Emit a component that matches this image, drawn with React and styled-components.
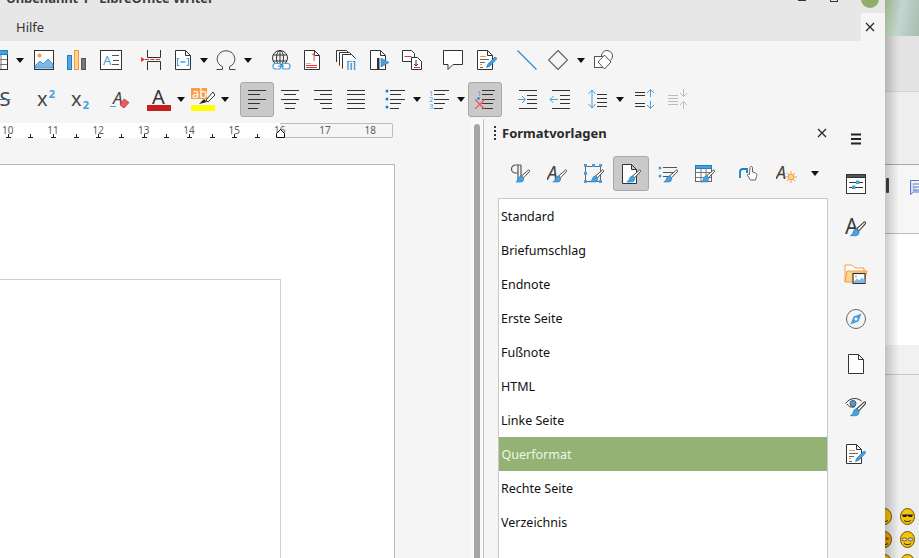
import React from "react";
import styled, { createGlobalStyle } from "styled-components";

const INK = "#333333";
const BLUE = "#1c7fc4";
const SKY = "#4a9fdd";
const ORANGE = "#f59a3e";
const RED = "#e0353a";

const GlobalStyle = createGlobalStyle`
  html, body { margin: 0; height: 100%; overflow: hidden; }
  #root { height: 100%; }
  body { font-family: "Noto Sans", "Open Sans", sans-serif; }
`;

const Screen = styled.div`
  display: flex;
  width: 919px;
  height: 558px;
  overflow: hidden;
  background: #eee;
`;

const Win = styled.div`
  display: flex;
  flex-direction: column;
  flex: 0 0 885px;
  height: 100%;
  overflow: hidden;
  background: #f5f5f5;
`;

const TitleBar = styled.div`
  display: flex;
  align-items: flex-start;
  flex: 0 0 13px;
  padding-left: 6px;
  overflow: hidden;
  background: #e7e7e7;
`;

const TitleText = styled.span`
  margin-top: -12px;
  font-size: 13px;
  line-height: 20px;
  font-weight: 700;
  color: #3d3d3d;
  white-space: nowrap;
  letter-spacing: -0.1px;
`;

const MinBtn = styled.span`
  width: 8px;
  height: 1px;
  margin-left: auto;
  background: #333;
`;

const MaxBtn = styled.span`
  width: 6px;
  height: 1px;
  margin-left: 24px;
  border: 1px solid #333;
  border-top: 0;
`;

const CloseDot = styled.span`
  width: 18px;
  height: 18px;
  margin: -10px 6px 0 23px;
  border-radius: 50%;
  background: #8fae6b;
`;

const MenuBar = styled.div`
  display: flex;
  align-items: center;
  flex: 0 0 28px;
  background: #e7e7e7;
`;

const MenuItem = styled.span`
  margin-left: 16px;
  font-size: 13px;
  color: #333;
`;

const MenuClose = styled.div`
  display: flex;
  align-items: center;
  box-sizing: border-box;
  width: 24px;
  height: 100%;
  margin-left: auto;
  padding-left: 4px;
  background: #f5f5f5;
`;

const Toolbar = styled.div`
  display: flex;
  align-items: center;
  flex: 0 0 ${(p) => p.$h}px;
`;

const Tool = styled.span`
  display: flex;
  align-items: center;
  justify-content: center;
  flex: 0 0 ${(p) => p.$w || 20}px;
  height: 20px;
  margin-left: ${(p) => p.$ml || 0}px;
`;

const ActiveTool = styled.span`
  display: flex;
  align-items: center;
  justify-content: center;
  box-sizing: border-box;
  flex: 0 0 34px;
  height: 35px;
  margin-left: ${(p) => p.$ml || 0}px;
  border: 1px solid #a8a8a8;
  border-radius: 3px;
  background: #c9c9c9;
`;

const Arrow = styled.span`
  flex: none;
  width: 0;
  height: 0;
  margin-left: ${(p) => p.$ml || 0}px;
  border-left: 4px solid transparent;
  border-right: 4px solid transparent;
  border-top: 5px solid #111;
`;

const StrikeS = styled.span`
  font-size: 20px;
  line-height: 20px;
  color: #444;
  text-decoration: line-through;
  text-decoration-color: ${BLUE};
  text-decoration-thickness: 1px;
`;

const ScriptText = styled.span`
  font-size: 20px;
  line-height: 20px;
  color: #444;
`;

const ScriptMark = styled.span`
  position: relative;
  top: ${(p) => (p.$up ? -6 : 5)}px;
  margin-left: 1px;
  font-size: 11px;
  font-weight: 700;
  color: ${SKY};
`;

const Main = styled.div`
  display: flex;
  flex: 1;
  min-height: 0;
`;

const DocArea = styled.div`
  display: flex;
  flex-direction: column;
  flex: 0 0 471px;
  padding-top: 4px;
  overflow: hidden;
`;

const Ruler = styled.div`
  position: relative;
  display: flex;
  flex: 0 0 15px;
  width: 393px;
  background: linear-gradient(90deg, #fff 280px, transparent 280px);
`;

const RulerMargin = styled.div`
  position: absolute;
  top: 0;
  left: 280px;
  width: 112px;
  height: 13px;
  border: 1px solid #bcbcbc;
  border-left: 0;
  border-radius: 0 2px 2px 0;
`;

const RulerUnit = styled.div`
  position: relative;
  flex: 0 0 45.33px;
  margin-left: ${(p) => p.$ml || 0}px;
  font-size: 10px;
  line-height: 14px;
  text-align: center;
  color: #6b5a4d;
`;

const Tick = styled.i`
  position: absolute;
  bottom: 0;
  left: ${(p) => p.$left};
  width: 5px;
  height: 4px;
  margin-left: -2px;
  background:
    linear-gradient(#222, #222) center bottom / 5px 1px no-repeat,
    linear-gradient(#222, #222) center top / 1px 4px no-repeat;
`;

const IndentMark = styled.i`
  position: absolute;
  left: 276px;
  bottom: 0;
  display: flex;
  width: 9px;
  height: 9px;
`;

const Page = styled.div`
  display: flex;
  flex: 1;
  box-sizing: border-box;
  width: 405px;
  margin: 26px 0 0 -10px;
  padding: 114px 113px 0 0;
  border: 1px solid #b9b9b9;
  border-bottom: 0;
  background: #fff;
`;

const MarginBox = styled.div`
  flex: 1;
  border-top: 1px solid #cfcfcf;
  border-right: 1px solid #cfcfcf;
`;

const ScrollTrack = styled.div`
  flex: 0 0 13px;
  padding: 5px 3px 0;
  box-sizing: border-box;
  border-right: 1px solid #bfbfbf;
  background: #f9f9f9;
`;

const ScrollThumb = styled.div`
  width: 6px;
  height: 100%;
  border-radius: 3px 3px 0 0;
  background: #a6a6a6;
`;

const Panel = styled.div`
  display: flex;
  flex-direction: column;
  flex: 0 0 357px;
`;

const PanelHead = styled.div`
  display: flex;
  align-items: center;
  flex: 0 0 28px;
  padding: 0 14px 0 10px;
`;

const Grip = styled.span`
  display: grid;
  gap: 2px;
  margin-right: 6px;
`;

const GripDot = styled.i`
  display: block;
  width: 2px;
  height: 2px;
  background: #333;
`;

const PanelTitle = styled.span`
  flex: 1;
  font-size: 13px;
  font-weight: 700;
  color: #2a2a2a;
`;

const StyleBar = styled.div`
  display: flex;
  align-items: center;
  flex: 0 0 35px;
  margin-top: 9px;
  padding-left: 18px;
`;

const StyleBtn = styled.span`
  display: flex;
  align-items: center;
  justify-content: center;
  box-sizing: border-box;
  flex: 0 0 36px;
  height: 35px;
  margin-left: ${(p) => p.$ml || 0}px;
  border: 1px solid ${(p) => (p.$active ? "#a8a8a8" : "transparent")};
  border-radius: 3px;
  background: ${(p) => (p.$active ? "#c9c9c9" : "transparent")};
`;

const StyleList = styled.ul`
  flex: 1;
  width: 330px;
  box-sizing: border-box;
  margin: 7px 0 0 14px;
  padding: 0;
  list-style: none;
  border: 1px solid #c9c9c9;
  border-bottom: 0;
  background: #fff;
`;

const StyleRow = styled.li`
  height: 34px;
  padding-left: ${(p) => (p.$selected ? 2.5 : 2)}px;
  font-size: 12.5px;
  line-height: 36px;
  color: ${(p) => (p.$selected ? "#eef6e4" : "#111")};
  background: ${(p) => (p.$selected ? "#93b273" : "transparent")};
`;

const TabBar = styled.div`
  display: flex;
  flex-direction: column;
  gap: 25px;
  flex: 0 0 44px;
  padding: 10px 0 0 2px;
  box-sizing: border-box;
`;

const TabIcon = styled.span`
  display: flex;
  align-items: center;
  justify-content: center;
  width: 26px;
  height: 20px;
`;

const Backdrop = styled.div`
  position: relative;
  display: flex;
  flex-direction: column;
  flex: 1;
  overflow: hidden;
  &::after {
    content: "";
    position: absolute;
    top: 36px;
    bottom: 0;
    left: 0;
    width: 14px;
    background: linear-gradient(90deg, rgba(0, 0, 0, 0.2), transparent);
  }
`;

const Band = styled.div`
  position: relative;
  flex: ${(p) => (p.$h ? `0 0 ${p.$h}px` : "1")};
  box-sizing: border-box;
  border-bottom: ${(p) => (p.$line ? `1px solid ${p.$line}` : "0")};
  background: ${(p) => p.$bg};
`;

const DocMark = styled.span`
  position: absolute;
  top: 13px;
  left: 25px;
`;

const DarkMark = styled.span`
  position: absolute;
  top: 13px;
  left: 1px;
  width: 3px;
  height: 15px;
  border-radius: 1px;
  background: #444;
`;

const EmojiGrid = styled.div`
  display: grid;
  grid-template-columns: 15px 15px;
  grid-auto-rows: 17px;
  gap: 6px 8px;
  margin: 133px 0 0 -8px;
`;

const Svg = ({ w = 20, h = 20, children }) => (
  <svg width={w} height={h} viewBox={`0 0 ${w} ${h}`} fill="none" stroke={INK} strokeWidth="1">
    {children}
  </svg>
);

const Brush = ({ large }) => (
  <g transform={large ? "translate(-1 -3) scale(1.1 1.15)" : undefined}>
    <path d="M18.500 6 11.500 12l2 1.800L19.500 7.500c.4-1-.2-1.800-1-1.500z" fill="#fff" stroke={INK} strokeWidth=".9" />
    <path d="M11.300 12c-2.600.3-2.700 2.500-3.300 3.800-.3.8-1.200 1.600-2.200 2.200h4.700c2.300 0 3.700-1.800 3-4.100z" fill={SKY} stroke={BLUE} strokeWidth=".6" />
  </g>
);

const Pencil = () => (
  <path d="M20 8.500 13 16l-3.500 1.500L11 14l7-7z" fill={SKY} stroke={BLUE} strokeWidth=".8" />
);

const Doc = ({ x = 3.5, y = 0.5, w = 14, h = 19, fill = "#fff" }) => (
  <path d={`M${x} ${y}h${w - 5}l5 5v${h - 5}h-${w}z M${x + w - 5} ${y}v5h5`} fill={fill} stroke={INK} />
);

const Lines = ({ rows, x = 1 }) => (
  <g stroke={INK}>
    {rows.map(([l, r], i) => (
      <path key={i} d={`M${x + l} ${Math.floor(i * 4.5) + 1.5}H${x + r}`} />
    ))}
  </g>
);

const icons = {
  table: (
    <Svg>
      <rect x=".5" y=".5" width="19" height="19" fill="#fff" />
      <rect x=".5" y=".5" width="19" height="4" fill={SKY} stroke={BLUE} />
      <path d="M7 5v14M13 5v14M1 9.500h18M1 14.500h18" stroke="#777" />
    </Svg>
  ),
  image: (
    <Svg>
      <rect x=".5" y=".5" width="19" height="19" fill="#fff" />
      <circle cx="5.500" cy="5.500" r="2" fill={ORANGE} stroke="none" />
      <path d="M1 18v-2l5-5 3 3 5-5 5 5v4z" fill="#7db9e8" stroke={BLUE} strokeWidth=".7" />
    </Svg>
  ),
  chart: (
    <Svg>
      <rect x=".5" y="5.500" width="4" height="14" fill="#5ba4dd" stroke={BLUE} />
      <rect x="7.500" y=".5" width="4" height="19" fill="#fcd38f" stroke={ORANGE} />
      <rect x="14.500" y="8.500" width="4" height="11" fill="#777" stroke="#555" />
    </Svg>
  ),
  textbox: (
    <Svg w={22}>
      <rect x=".5" y=".5" width="21" height="19" fill="#fff" />
      <text x="3" y="15" fontSize="13" fontFamily="Noto Sans" fill={SKY} stroke="none">A</text>
      <path d="M12 5.500h7M13 10.500h6M12 14.500h7" stroke="#555" />
    </Svg>
  ),
  pagebreak: (
    <Svg w={22}>
      <path d="M7.500 0v7.500h13V0M7.500 20v-8.500h13V20" />
      <path d="M5 9.500h16" stroke={RED} strokeDasharray="4 1.500" />
      <path d="M1 7v5l4-2.500z" fill={RED} stroke="none" />
    </Svg>
  ),
  field: (
    <Svg w={18}>
      <Doc x={1.5} w={15} />
      <path d="M5.500 8.500h-2v7h2M12.500 8.500h2v7h-2" stroke={SKY} strokeWidth="1.200" />
      <path d="M6.500 12h5" stroke={SKY} strokeWidth="1.500" />
    </Svg>
  ),
  omega: (
    <Svg>
      <path d="M.5 19.500h6v-2.800C3 15 1.200 12.400 1.200 9.400 1.200 4.400 5 .8 10 .8s8.800 3.600 8.800 8.600c0 3-1.800 5.600-5.300 7.300v2.800h6" stroke="#444" />
    </Svg>
  ),
  link: (
    <Svg w={22}>
      <circle cx="10" cy="8" r="7.500" />
      <ellipse cx="10" cy="8" rx="3.500" ry="7.500" />
      <path d="M3 5h14M3 11h14M10 0v16" />
      <rect x="3" y="13.500" width="8" height="5.500" rx="2.500" fill="#fff" stroke={SKY} strokeWidth="1.200" />
      <rect x="12" y="13.500" width="8" height="5.500" rx="2.500" fill="#fff" stroke={SKY} strokeWidth="1.200" />
      <path d="M8 16.200h6" stroke={SKY} strokeWidth="1.200" />
    </Svg>
  ),
  footnote: (
    <Svg w={16}>
      <Doc x={.5} w={15} />
      <text x="7" y="11" fontSize="10" fontFamily="Noto Sans" fill={RED} stroke="none">1</text>
      <path d="M2 13.500h5" stroke="#bbb" />
      <path d="M2 15.500h11M2 17.500h11" stroke={RED} />
    </Svg>
  ),
  endnote: (
    <Svg w={22}>
      <path d="M.5 12V.5h10l3 3" />
      <path d="M3.500 15.500V2.500h10l3 3" fill="#fff" />
      <path d="M6.500 18.500V4.500h9l4 4v1" fill="#fff" />
      <rect x="10" y="9" width="12" height="11" fill="#f5f5f5" stroke="none" />
      <text x="10.500" y="19.500" fontSize="12" fontFamily="Liberation Sans" fill={BLUE} stroke="none">[i]</text>
    </Svg>
  ),
  bookmark: (
    <Svg w={20}>
      <Doc x={.5} w={15} />
      <rect x="7" y="8" width="2.500" height="12" fill={INK} stroke="none" />
      <path d="M11 8v9l8-4.500z" fill={SKY} stroke={BLUE} strokeWidth=".6" />
    </Svg>
  ),
  crossref: (
    <Svg>
      <path d="M.5.500h9l3 3v8H.5z" fill="#fff" />
      <path d="M2.500 6.500h7" stroke={RED} />
      <path d="M9.500 7.500h6l4 4v8h-10z" fill="#fff" />
      <path d="M14 10v6M12 14l2 2 2-2" />
      <path d="M12 17.500h6" stroke={RED} />
    </Svg>
  ),
  comment: (
    <Svg>
      <path d="M.5.500h19v14H10l-5 5v-5H.5z" fill="#fff" />
    </Svg>
  ),
  tracked: (
    <Svg>
      <Doc x={.5} w={15} />
      <path d="M3 6.500h6M3 14.500h2" stroke={ORANGE} />
      <path d="M3 9.500h9M3 12.500h5M3 17.500h3" stroke="#666" />
      <Pencil />
    </Svg>
  ),
  line: (
    <Svg>
      <path d="M.5.500l19 19" stroke="#2a8fd4" strokeWidth="1.200" />
    </Svg>
  ),
  diamond: (
    <Svg>
      <path d="M10 .5 19.500 10 10 19.500.5 10z" stroke="#666" strokeWidth="1.200" />
    </Svg>
  ),
  shapes: (
    <Svg>
      <circle cx="13" cy="6" r="5.500" stroke="#555" fill="#fff" />
      <rect x=".5" y="6.500" width="11" height="11" fill="#fff" stroke="#555" />
      <path d="M10.500 5 17 12l-6.500 7L4 12z" stroke="#555" fill="#fff" />
    </Svg>
  ),
  clear: (
    <Svg w={20}>
      <text x="3" y="15" fontSize="17" fontStyle="italic" fontFamily="Noto Sans" fill="#444" stroke="none">A</text>
      <path d="M0 17.500h6" stroke={SKY} />
      <path d="M14 10l5 3.500-5 5.500-4-3z" fill="#ef5a60" stroke="#c9373c" strokeWidth=".8" />
    </Svg>
  ),
  fontColor: (
    <Svg w={24} h={24}>
      <text x="5" y="17" fontSize="20" fontFamily="Noto Sans" fill="#333" stroke="none">A</text>
      <rect y="18" width="24" height="6" fill="#c6201c" stroke="none" />
    </Svg>
  ),
  highlight: (
    <Svg w={24} h={24}>
      <rect width="16" height="11" y="1" fill="#f99e45" stroke="none" />
      <text x="1" y="11" fontSize="13" fontFamily="Noto Sans" fill="#fff" stroke="none">ab</text>
      <path d="M22 5l-7 8 2 2 7-7z" fill="#fff" stroke={INK} />
      <path d="M8 17l5-5 3 3z" fill="#222" stroke="none" />
      <rect y="18" width="24" height="6" fill="#ffff00" stroke="none" />
    </Svg>
  ),
  left: <Svg w={18}><Lines x={0} rows={[[0, 18], [0, 12], [0, 18], [0, 12], [0, 10]]} /></Svg>,
  center: <Svg w={18}><Lines x={0} rows={[[0, 18], [3, 15], [0, 18], [3, 15], [4, 14]]} /></Svg>,
  right: <Svg w={18}><Lines x={0} rows={[[0, 18], [6, 18], [0, 18], [6, 18], [8, 18]]} /></Svg>,
  justify: <Svg w={18}><Lines x={0} rows={[[0, 18], [0, 18], [0, 18], [0, 18], [0, 18]]} /></Svg>,
  bullets: (
    <Svg>
      <circle cx="2" cy="2" r="1.500" fill={BLUE} stroke="none" />
      <circle cx="2" cy="10" r="1.500" fill={BLUE} stroke="none" />
      <circle cx="2" cy="18" r="1.500" fill={BLUE} stroke="none" />
      <Lines x={0} rows={[[5, 20], [5, 16], [5, 20], [5, 16], [5, 14]]} />
    </Svg>
  ),
  numbered: (
    <Svg>
      <text x="0" y="6.500" fontSize="7.500" fontFamily="Noto Sans" fill={SKY} stroke="none">1</text>
      <text x="0" y="13" fontSize="7.500" fontFamily="Noto Sans" fill={SKY} stroke="none">2</text>
      <text x="0" y="19.500" fontSize="7.500" fontFamily="Noto Sans" fill={SKY} stroke="none">3</text>
      <Lines x={0} rows={[[5, 20], [5, 16], [5, 20], [5, 16], [5, 14]]} />
    </Svg>
  ),
  noList: (
    <Svg>
      <text x="2" y="6.500" fontSize="7.500" fontFamily="Noto Sans" fill={SKY} stroke="none">1</text>
      <circle cx="3.500" cy="9.500" r="1.300" fill={BLUE} stroke="none" />
      <Lines x={0} rows={[[7, 20], [7, 18], [7, 20], [7, 18], [7, 18]]} />
      <path d="M0 10.500l9.500 9.500M9.500 10.500 0 20" stroke="#ef4d50" strokeWidth="1.100" />
    </Svg>
  ),
  indent: (
    <Svg w={20}>
      <path d="M1 1.500h18M9 6.500h10M9 10.500h10M9 14.500h10M1 19.500h18" />
      <path d="M0 10.500h7M4 7 7.500 10.500 4 14" stroke={SKY} />
    </Svg>
  ),
  outdent: (
    <Svg w={22}>
      <path d="M3 1.500h18M11 6.500h10M11 10.500h10M11 14.500h10M3 19.500h18" />
      <path d="M1 10.500h8M4.500 7 1 10.500 4.500 14" stroke={SKY} />
    </Svg>
  ),
  spacing: (
    <Svg>
      <path d="M5 1v18M1.500 5 5 1l3.500 4M1.500 15 5 19l3.500-4" stroke={SKY} />
      <path d="M10 5.500h10M10 9.500h10M10 13.500h10M10 17.500h10" />
    </Svg>
  ),
  paraUp: (
    <Svg>
      <path d="M0 3.500h10M0 6.500h10M0 14.500h10M0 17.500h10" />
      <path d="M15.500 8V.5M12 4l3.500-3.500L19 4M15.500 12v7.500M12 16l3.500 3.500L19 16" stroke={SKY} />
    </Svg>
  ),
  paraDown: (
    <Svg>
      <path d="M0 6.500h10M0 9.500h10M0 12.500h10M0 15.500h10" stroke="#bbb" />
      <path d="M15.500 0v7.500M12 4l3.500 3.500L19 4M15.500 20v-7.500M12 16l3.500-3.500L19 16" stroke="#bbb" />
    </Svg>
  ),
  xSmall: (
    <Svg w={10} h={10}>
      <path d="M1 1l8 8M9 1 1 9" stroke="#222" strokeWidth="1.200" />
    </Svg>
  ),
  paraStyle: (
    <Svg>
      <path d="M11 1H5.500a4 4 0 0 0 0 8H8V1M8 9v8M11 1v14" stroke="#555" strokeWidth="1.200" />
      <Brush />
    </Svg>
  ),
  charStyle: (
    <Svg>
      <text x="0" y="16" fontSize="19" fontStyle="italic" fontFamily="Noto Sans" fill="#444" stroke="none">A</text>
      <Brush />
    </Svg>
  ),
  tabChar: (
    <Svg w={22} h={22}>
      <text x="0" y="16" fontSize="21" fontFamily="Noto Sans" fill="#3a3a3a" stroke="none">A</text>
      <Brush large />
    </Svg>
  ),
  frameStyle: (
    <Svg>
      <rect x="1.500" y="2.500" width="15" height="15" stroke="#666" />
      <g fill={SKY} stroke="none">
        <rect width="3" height="3" />
        <rect x="8" width="3" height="3" />
        <rect x="15" width="3" height="3" />
        <rect y="8" width="3" height="3" />
        <rect y="16" width="3" height="3" />
        <rect x="15" y="16" width="3" height="3" />
      </g>
      <Brush />
    </Svg>
  ),
  pageStyle: (
    <Svg>
      <Doc x={1.500} w={14} />
      <Brush />
    </Svg>
  ),
  listStyle: (
    <Svg>
      <circle cx="2" cy="4" r="1.500" fill={SKY} stroke="none" />
      <circle cx="2" cy="12" r="1.500" fill={SKY} stroke="none" />
      <path d="M5 3.500h14M5 8.500h10M5 12.500h6" stroke="#555" />
      <Brush />
    </Svg>
  ),
  tableStyle: (
    <Svg>
      <rect x=".5" y="1.500" width="16" height="16" fill="#fff" stroke="#666" />
      <rect x=".5" y="1.500" width="16" height="3" fill={SKY} stroke={BLUE} />
      <path d="M6 4v13M11 4v13M1 8.500h15M1 13.500h15" stroke="#777" />
      <Brush />
    </Svg>
  ),
  fillMode: (
    <Svg>
      <path d="M1 14V8c0-2 1-3 3-3h4v4" stroke={BLUE} strokeWidth="1.800" />
      <path d="M11 3.500c1-1.500 2.500-1 2.500 0V8l3 1c1.500.5 1.500 2 1 3.500l-1 3.500h-5l-3-4.500c-.5-1 .5-2 2-1z" fill="#fff" stroke="#555" strokeWidth=".9" />
    </Svg>
  ),
  newStyle: (
    <Svg w={22}>
      <text x="0" y="15" fontSize="18" fontStyle="italic" fontFamily="Noto Sans" fill="#444" stroke="none">A</text>
      <circle cx="15" cy="13" r="3" fill="#fbd38a" stroke={ORANGE} />
      <path d="M15 7v2.500M15 16.500V19M9 13h2.500M18.500 13H21M10.800 8.800l1.800 1.800M17.400 15.400l1.800 1.800M19.200 8.800l-1.800 1.800M12.600 15.400l-1.800 1.800" stroke={ORANGE} />
    </Svg>
  ),
  tabProps: (
    <Svg>
      <rect x=".5" y=".5" width="19" height="19" fill="#fff" />
      <rect x=".5" y=".5" width="19" height="3" fill="#555" />
      <path d="M3 8.500h14M3 13.500h14" />
      <rect x="10" y="6.500" width="3.500" height="3.500" fill={SKY} stroke="none" />
      <rect x="6" y="11.500" width="3.500" height="3.500" fill={SKY} stroke="none" />
    </Svg>
  ),
  tabGallery: (
    <Svg w={24}>
      <path d="M1 18V1h7l3 3h9v5" stroke={ORANGE} fill="#fff" />
      <path d="M1 18 3 7h20l-3 11z" fill="#fcd38f" stroke={ORANGE} />
      <rect x="9" y="9.500" width="12" height="10" fill="#fff" stroke="#333" strokeWidth="1.200" />
      <circle cx="12" cy="12.500" r="1" fill={ORANGE} stroke="none" />
      <path d="M10 19v-1.500l3-3 2 2 3-3 2.500 2.500V19z" fill="#7db9e8" stroke="none" />
    </Svg>
  ),
  tabNav: (
    <Svg>
      <circle cx="10" cy="10" r="9.500" stroke="#666" />
      <path d="M15.500 4.500 12.500 12.500 4.500 15.500 7.500 7.500z" fill={SKY} stroke="none" />
      <circle cx="10" cy="10" r="1.500" fill="#fff" stroke="none" />
    </Svg>
  ),
  tabPage: (
    <Svg w={16}>
      <Doc x={.5} w={15} />
    </Svg>
  ),
  tabInspect: (
    <Svg w={22} h={22}>
      <path d="M.5 5.500C3 2 6.500.5 9.500.5s5 1 7 2.500" />
      <path d="M2 6c2 3 5 4 8 2.500" />
      <circle cx="8" cy="5.500" r="3" fill={SKY} stroke="#555" />
      <Brush large />
    </Svg>
  ),
};

const toolsTop = [
  ["table", -12], ["arrow", 7], ["image", 9], ["chart", 13], ["textbox", 13, 22],
  ["pagebreak", 18, 22], ["field", 12, 18], ["arrow", 7], ["omega", 7], ["arrow", 7],
  ["link", 17, 22], ["footnote", 12, 16], ["endnote", 16, 22], ["bookmark", 12],
  ["crossref", 12], ["comment", 21], ["tracked", 14], ["line", 20], ["diamond", 11],
  ["arrow", 8], ["shapes", 8],
];

const toolsBottom = [
  ["strike", -3, 16], ["sup", 23, 20], ["sub", 14, 20], ["clear", 20], ["fontColor", 17, 24],
  ["arrow", 5], ["highlight", 5, 24], ["arrow", 5], ["left", 10, 0, true], ["center", 6, 20],
  ["right", 13, 20], ["justify", 13, 20], ["bullets", 19], ["arrow", 7], ["numbered", 7],
  ["arrow", 7], ["noList", 2, 0, true], ["indent", 16], ["outdent", 11, 22], ["spacing", 16],
  ["arrow", 8], ["paraUp", 10], ["paraDown", 13],
];

const styleFamilies = [
  { icon: "paraStyle" },
  { icon: "charStyle", ml: 1 },
  { icon: "frameStyle", ml: 1 },
  { icon: "pageStyle", ml: 1, active: true },
  { icon: "listStyle", ml: 1 },
  { icon: "tableStyle", ml: 1 },
  { icon: "fillMode", ml: 8 },
  { icon: "newStyle", ml: 2 },
];

const pageStyles = [
  "Standard", "Briefumschlag", "Endnote", "Erste Seite", "Fußnote",
  "HTML", "Linke Seite", "Querformat", "Rechte Seite", "Verzeichnis",
];

const deckTabs = ["tabProps", "tabChar", "tabGallery", "tabNav", "tabPage", "tabInspect", "tracked"];

function renderTool([name, ml, w, active], i) {
  if (active) {
    return <ActiveTool key={i} $ml={ml}>{icons[name]}</ActiveTool>;
  }
  if (name === "arrow") {
    return <Tool key={i} $ml={ml} $w={10}><Arrow /></Tool>;
  }
  if (name === "strike") {
    return <Tool key={i} $ml={ml} $w={w}><StrikeS>S</StrikeS></Tool>;
  }
  if (name === "sup" || name === "sub") {
    return (
      <Tool key={i} $ml={ml} $w={w}>
        <ScriptText>x</ScriptText>
        <ScriptMark $up={name === "sup"}>2</ScriptMark>
      </Tool>
    );
  }
  return <Tool key={i} $ml={ml} $w={w}>{icons[name]}</Tool>;
}

function Emoji({ kind }) {
  return (
    <svg width="15" height="17" viewBox="0 0 15 17">
      <ellipse cx="7.500" cy="8.500" rx="7" ry="8" fill={kind === "angry" ? "#e8a80a" : "#f6c40a"} stroke="#6b5400" />
      {kind === "shades" && <path d="M2 6.500h11l-1 2.500H9L7.500 7.500 6 9H3z" fill="#222" />}
      {kind === "glasses" && (
        <g fill="#d9d9d9" stroke="#333" strokeWidth=".7">
          <ellipse cx="4.500" cy="8.500" rx="2.500" ry="1.500" />
          <ellipse cx="10.500" cy="8.500" rx="2.500" ry="1.500" />
        </g>
      )}
      {kind === "angry" && <path d="M9 6l4 2-4 1z" fill="#c0201c" />}
      <path d="M4 12.500c2 1.500 5 1.500 7 0" fill="none" stroke="#222" />
    </svg>
  );
}

export default function App() {
  return (
    <Screen>
      <GlobalStyle />
      <Win>
        <TitleBar>
          <TitleText>Unbenannt 1 - LibreOffice Writer</TitleText>
          <MinBtn />
          <MaxBtn />
          <CloseDot />
        </TitleBar>
        <MenuBar>
          <MenuItem>Hilfe</MenuItem>
          <MenuClose>{icons.xSmall}</MenuClose>
        </MenuBar>
        <Toolbar $h={38}>{toolsTop.map(renderTool)}</Toolbar>
        <Toolbar $h={40}>{toolsBottom.map(renderTool)}</Toolbar>
        <Main>
          <DocArea>
            <Ruler>
              <RulerMargin />
              {[10, 11, 12, 13, 14, 15, 16, 17, 18].map((n, i) => (
                <RulerUnit key={n} $ml={i === 0 ? -15 : 0}>
                  {n}
                  {n < 16 && <Tick $left="50%" />}
                  {n < 16 && <Tick $left="100%" />}
                </RulerUnit>
              ))}
              <IndentMark>
                <svg width="9" height="9" viewBox="0 0 9 9">
                  <path d="M4.500.5 8.500 4.500v4h-8v-4z" fill="#fff" stroke="#111" />
                </svg>
              </IndentMark>
            </Ruler>
            <Page>
              <MarginBox />
            </Page>
          </DocArea>
          <ScrollTrack>
            <ScrollThumb />
          </ScrollTrack>
          <Panel>
            <PanelHead>
              <Grip>
                <GripDot />
                <GripDot />
                <GripDot />
                <GripDot />
              </Grip>
              <PanelTitle>Formatvorlagen</PanelTitle>
              {icons.xSmall}
            </PanelHead>
            <StyleBar>
              {styleFamilies.map((f) => (
                <StyleBtn key={f.icon} $ml={f.ml} $active={f.active}>{icons[f.icon]}</StyleBtn>
              ))}
              <Arrow $ml={6} />
            </StyleBar>
            <StyleList>
              {pageStyles.map((s) => (
                <StyleRow key={s} $selected={s === "Querformat"}>{s}</StyleRow>
              ))}
            </StyleList>
          </Panel>
          <TabBar>
            <TabIcon>
              <Svg w={10} h={12}>
                <path d="M0 1.500h10M0 6h10M0 10.500h10" stroke="#222" strokeWidth="2" />
              </Svg>
            </TabIcon>
            {deckTabs.map((t) => (
              <TabIcon key={t}>{icons[t]}</TabIcon>
            ))}
          </TabBar>
        </Main>
      </Win>
      <Backdrop>
        <Band $h={36} $bg="linear-gradient(100deg, #9db38a 0%, #c3d6d2 45%, #a8bcae 100%)" />
        <Band $h={56} $bg="#e3e3e3" $line="#d2d2d2" />
        <Band $h={73} $bg="#eeeeee" $line="#a9a9a9" />
        <Band $h={69} $bg="#f6f6f6" $line="#bdbdbd">
          <DarkMark />
          <DocMark>
            <svg width="9" height="15" viewBox="0 0 9 15">
              <path d="M.5.500H9M.5.500v14l3-2.500H9" fill="#cfe0f7" stroke="#5577cc" />
              <path d="M3 4h6M3 7h6M3 10h6" stroke="#5577cc" />
            </svg>
          </DocMark>
        </Band>
        <Band $h={111} $bg="#fff" />
        <Band $h={30} $bg="#f1f1f1" $line="#c6c6c6" />
        <Band $bg="#eeeeee">
          <EmojiGrid>
            <Emoji kind="plain" />
            <Emoji kind="shades" />
            <Emoji kind="angry" />
            <Emoji kind="glasses" />
            <Emoji kind="plain" />
            <Emoji kind="plain" />
          </EmojiGrid>
        </Band>
      </Backdrop>
    </Screen>
  );
}
